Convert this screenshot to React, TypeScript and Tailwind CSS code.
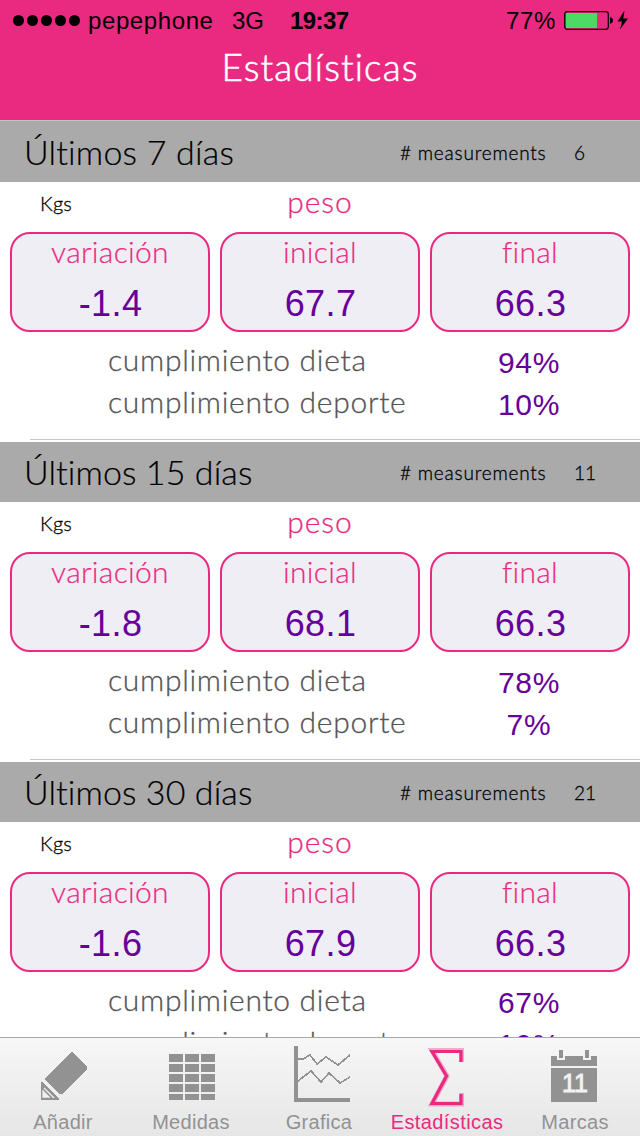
import type { ReactNode } from "react";

type Period = {
  title: string;
  titleClass: string;
  count: string;
  variation: string;
  initial: string;
  final: string;
  diet: string;
  sport: string;
};

const periods: Period[] = [
  { title: "Últimos 7 días", titleClass: "tracking-[0.2px]", count: "6", variation: "-1.4", initial: "67.7", final: "66.3", diet: "94%", sport: "10%" },
  { title: "Últimos 15 días", titleClass: "tracking-[0.1px]", count: "11", variation: "-1.8", initial: "68.1", final: "66.3", diet: "78%", sport: "7%" },
  { title: "Últimos 30 días", titleClass: "tracking-[0.1px]", count: "21", variation: "-1.6", initial: "67.9", final: "66.3", diet: "67%", sport: "10%" },
];

function StatusBar() {
  return (
    <div className="flex h-10 items-start font-['Liberation_Sans',sans-serif] text-[24px] leading-[41px] whitespace-nowrap text-black">
      <div className="flex w-[88px] shrink-0 gap-[3px] pt-[15px] pl-[13px]">
        {[0, 1, 2, 3, 4].map((i) => (
          <span key={i} className="size-[11px] rounded-full bg-black" />
        ))}
      </div>
      <span className="w-[144px] shrink-0 tracking-[0.6px]">pepephone</span>
      <span className="w-[58px] shrink-0">3G</span>
      <span className="w-[216px] shrink-0 font-bold tracking-[-0.6px]">19:37</span>
      <span className="w-[58px] shrink-0 tracking-[0.6px]">77%</span>
      <svg className="mt-[8px] h-6 w-[70px] shrink-0" viewBox="0 0 70 24">
        <rect x="0.7" y="3.7" width="43.6" height="17.6" rx="2.5" fill="none" stroke="#000" strokeWidth="1.2" />
        <rect x="2" y="5" width="31" height="15" fill="#4cd964" />
        <path d="M46 9.2c2 .6 3 1.600 3 3.300s-1 2.700-3 3.300z" />
        <path d="M60.500 2.500 53.500 13.500H58L56 21.500 64 10.500H59.300z" />
      </svg>
    </div>
  );
}

function Card({ label, value }: { label: string; value: string }) {
  return (
    <div className="h-[100px] w-[200px] rounded-[20px] border-2 border-[#e92a80] bg-[#efeef4] text-center whitespace-nowrap">
      <div className="text-[30px] leading-[34px] font-light tracking-[0.3px] text-[#e92a80] [-webkit-text-stroke:0.2px]">{label}</div>
      <div className="mt-[11px] pl-px font-['Liberation_Sans',sans-serif] text-[36px] leading-[50px] tracking-[0.4px] text-[#660099]">{value}</div>
    </div>
  );
}

function Compliance({ label, value }: { label: string; value: string }) {
  return (
    <div className="flex h-[42px] whitespace-nowrap">
      <span className="w-[430px] pl-[108px] text-[30px] leading-[44px] font-light tracking-[0.7px] text-[#555] [-webkit-text-stroke:0.3px]">{label}</span>
      <span className="w-[198px] text-center font-['Liberation_Sans',sans-serif] text-[30px] leading-[52px] tracking-[0.7px] text-[#660099]">{value}</span>
    </div>
  );
}

function Section({ p }: { p: Period }) {
  return (
    <section className="h-80 shrink-0">
      <div className="flex h-[60px] bg-[#aaa] whitespace-nowrap text-black">
        <h2 className={"w-[400px] pl-6 text-[34px] leading-[60px] font-light [-webkit-text-stroke:0.2px] " + p.titleClass}>{p.title}</h2>
        <span className="w-[174px] text-[19px] leading-[62px] font-light tracking-[0.8px] [-webkit-text-stroke:0.3px]"># measurements</span>
        <span className="text-[19px] leading-[62px] font-light [-webkit-text-stroke:0.3px]">{p.count}</span>
      </div>
      <div className="flex h-[50px]">
        <span className="w-[220px] pl-10 text-[20px] leading-[42px] font-light tracking-[0.2px] [-webkit-text-stroke:0.3px]">Kgs</span>
        <span className="w-[200px] text-center text-[30px] leading-[38px] font-light tracking-[1px] text-[#e92a80] [-webkit-text-stroke:0.3px]">peso</span>
      </div>
      <div className="flex gap-[10px] px-[10px]">
        <Card label="variación" value={p.variation} />
        <Card label="inicial" value={p.initial} />
        <Card label="final" value={p.final} />
      </div>
      <div className="pt-[5px]">
        <Compliance label="cumplimiento dieta" value={p.diet} />
        <Compliance label="cumplimiento deporte" value={p.sport} />
      </div>
      <div className="mt-[18px] ml-[30px] h-px bg-[#c8c7cc]" />
    </section>
  );
}

function Tab({ label, active, labelClass, children }: { label: string; active?: boolean; labelClass: string; children: ReactNode }) {
  return (
    <div className={"flex w-32 flex-col items-center " + (active ? "text-[#e92a80]" : "text-[#929292]")}>
      <svg className="mt-[2px] h-[68px] w-16 shrink-0" viewBox="0 0 64 68" fill="currentColor" shapeRendering="crispEdges">
        {children}
      </svg>
      <span className={"mr-[2px] -mt-[2px] font-['Liberation_Sans',sans-serif] text-[20px] leading-[33px] whitespace-nowrap " + labelClass}>{label}</span>
    </div>
  );
}

function TabBar() {
  return (
    <nav className="flex h-[99px] shrink-0 border-t border-[#a9a9a9] bg-linear-to-b from-[#f7f7f7] to-[#e6e6e6]">
      <Tab label="Añadir" labelClass="tracking-[0.3px]">
        <path d="M40 12 55 27V29L30 54H27L13 40V38z" />
        <path d="M9 42h1L27 59v1H9z" />
        <path d="M12 48 22 58M11 51V57H17z" fill="#f0f0f0" stroke="#f0f0f0" strokeWidth="1.300" shapeRendering="auto" />
      </Tab>
      <Tab label="Medidas" labelClass="tracking-[0.3px]">
        {[9, 25, 41].map((x) =>
          [14, 24, 34, 44, 54].map((y) => <rect key={x + "-" + y} x={x} y={y} width="14" height={y === 54 ? 6 : 8} />)
        )}
      </Tab>
      <Tab label="Grafica" labelClass="tracking-[0.3px]">
        <path d="M6 6h4v52h52v4H6z" />
        <path d="M10 19h5l7-4 7 9 9-7 12 8 12-10M10 41l13-10 10 11 8-9 11 10 10-6" fill="none" stroke="currentColor" strokeWidth="1.700" />
      </Tab>
      <Tab label="Estadísticas" active labelClass="tracking-[0.4px]">
        <g fill="none" stroke="currentColor" shapeRendering="auto">
          <path d="M45.500 22V10.500H16L31 36 16 64H45.500V53" strokeWidth="5" strokeOpacity=".35" />
          <path d="M45 22V11.500H16L30.500 36 16 63.500H45V54" strokeWidth="3.200" />
        </g>
      </Tab>
      <Tab label="Marcas" labelClass="tracking-[0.3px]">
        <path d="M7 16h6v4h8v-4h18v4h8v-4h6v10H7zM15 10h4v8h-4zM41 10h4v8h-4zM7 28h46v34H7z" />
        <text x="31" y="52" textAnchor="middle" fill="#f2f2f2" stroke="#f2f2f2" strokeWidth="0.900" className="font-['Liberation_Sans',sans-serif] text-[25px]">11</text>
      </Tab>
    </nav>
  );
}

export default function App() {
  return (
    <div className="flex h-[1136px] w-[640px] flex-col overflow-hidden bg-white font-['Lato',sans-serif]">
      <header className="h-[120px] shrink-0 bg-[#e92a80]">
        <StatusBar />
        <h1 className="text-center text-[37px] leading-[54px] font-light tracking-[1.1px] text-white [-webkit-text-stroke:0.6px]">Estadísticas</h1>
      </header>
      <main className="flex min-h-0 flex-1 flex-col overflow-hidden border-t border-[#c4c4c4]">
        <div className="h-px shrink-0 bg-[#aaa]" />
        {periods.map((p) => (
          <Section key={p.title} p={p} />
        ))}
      </main>
      <TabBar />
    </div>
  );
}
